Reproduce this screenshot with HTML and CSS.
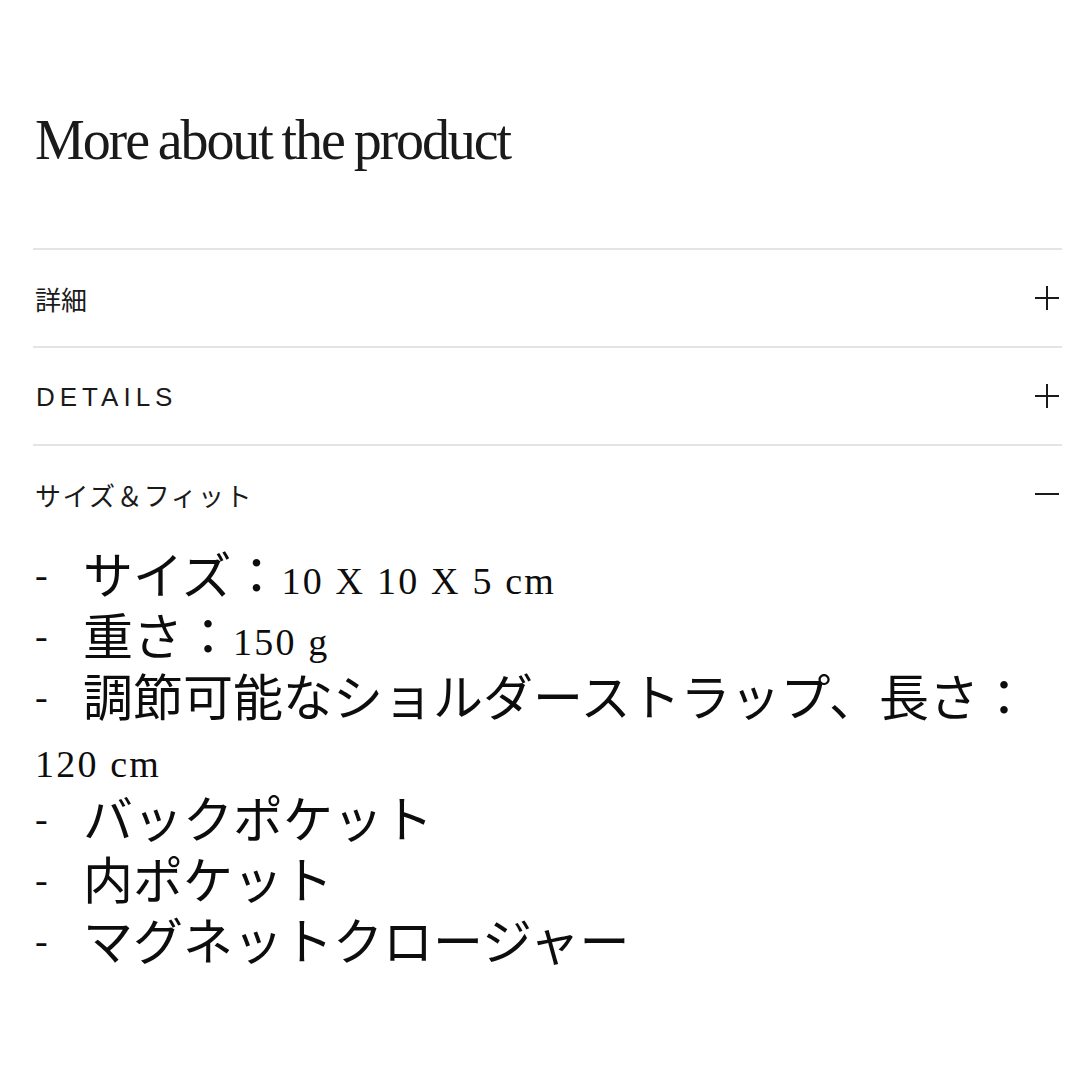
FILE: index.html
```html
<!DOCTYPE html>
<html lang="ja">
<head>
<meta charset="utf-8">
<title>More about the product</title>
<link rel="stylesheet" href="styles.css">
</head>
<body>
<main class="page">
  <h1 class="title">More about the product</h1>
  <section class="accordion">
    <div class="row">
      <div class="row-head">
        <span class="label label-jp">詳細</span>
        <svg class="icon" viewBox="0 0 26 26" aria-hidden="true"><path d="M1 13H25M13 1V25" /></svg>
      </div>
    </div>
    <div class="row">
      <div class="row-head">
        <span class="label label-en">DETAILS</span>
        <svg class="icon" viewBox="0 0 26 26" aria-hidden="true"><path d="M1 13H25M13 1V25" /></svg>
      </div>
    </div>
    <div class="row row-open">
      <div class="row-head">
        <span class="label label-jp label-wide">サイズ＆フィット</span>
        <svg class="icon" viewBox="0 0 26 26" aria-hidden="true"><path d="M1 13H25" /></svg>
      </div>
      <p class="content"><span class="dash">-</span>サイズ：<span class="num">10 X 10 X 5 cm</span><br><span class="dash">-</span>重さ：<span class="num">150 g</span><br><span class="dash">-</span>調節可能なショルダーストラップ、長さ：<span class="num">120 cm</span><br><span class="dash">-</span>バックポケット<br><span class="dash">-</span>内ポケット<br><span class="dash">-</span>マグネットクロージャー</p>
    </div>
  </section>
</main>
</body>
</html>
```
FILE: styles.css
```css
html, body {
  margin: 0;
  padding: 0;
  background: #ffffff;
}

body {
  width: 1080px;
  height: 1069px;
  overflow: hidden;
  color: #111111;
}

.page {
  margin-left: 33px;
  width: 1029px;
  padding-top: 104px;
}

.title {
  margin: 0;
  padding-left: 2px;
  font-family: "Liberation Serif", "Times New Roman", serif;
  font-weight: 400;
  font-size: 56px;
  line-height: 72px;
  letter-spacing: -2.1px;
  word-spacing: -2px;
  color: #1a1a1a;
}

.accordion {
  margin-top: 72px;
  border-top: 2px solid #e4e4e4;
}

.row {
  border-bottom: 2px solid #e4e4e4;
}

.row-open {
  border-bottom: none;
}

.row-head {
  height: 96px;
  display: flex;
  align-items: center;
  justify-content: space-between;
  padding-left: 2px;
  padding-right: 2px;
}

.label {
  color: #1a1a1a;
}

.label-jp {
  font-family: "Noto Sans CJK JP", "Noto Sans", sans-serif;
  font-size: 26px;
  font-weight: 400;
}

.label-wide {
  letter-spacing: 1.4px;
}

.label-en {
  font-family: "Liberation Sans", Arial, sans-serif;
  font-size: 26px;
  letter-spacing: 5px;
  font-weight: 400;
  padding-left: 1px;
  padding-top: 3px;
}

.icon {
  width: 26px;
  height: 26px;
  fill: none;
  stroke: #1a1a1a;
  stroke-width: 2;
}

.content {
  margin: 0 0 0 2px;
  font-family: "Noto Sans CJK JP", "Noto Sans", sans-serif;
  font-size: 50px;
  line-height: 61px;
  font-weight: 400;
  color: #0d0d0d;
}

.dash {
  display: inline-block;
  width: 48px;
  line-height: 0;
  font-family: "Liberation Serif", serif;
  font-size: 38px;
  vertical-align: 6px;
}

.num {
  font-family: "Liberation Serif", "Times New Roman", serif;
  font-size: 38px;
  line-height: 0;
  letter-spacing: 2.2px;
}
```
